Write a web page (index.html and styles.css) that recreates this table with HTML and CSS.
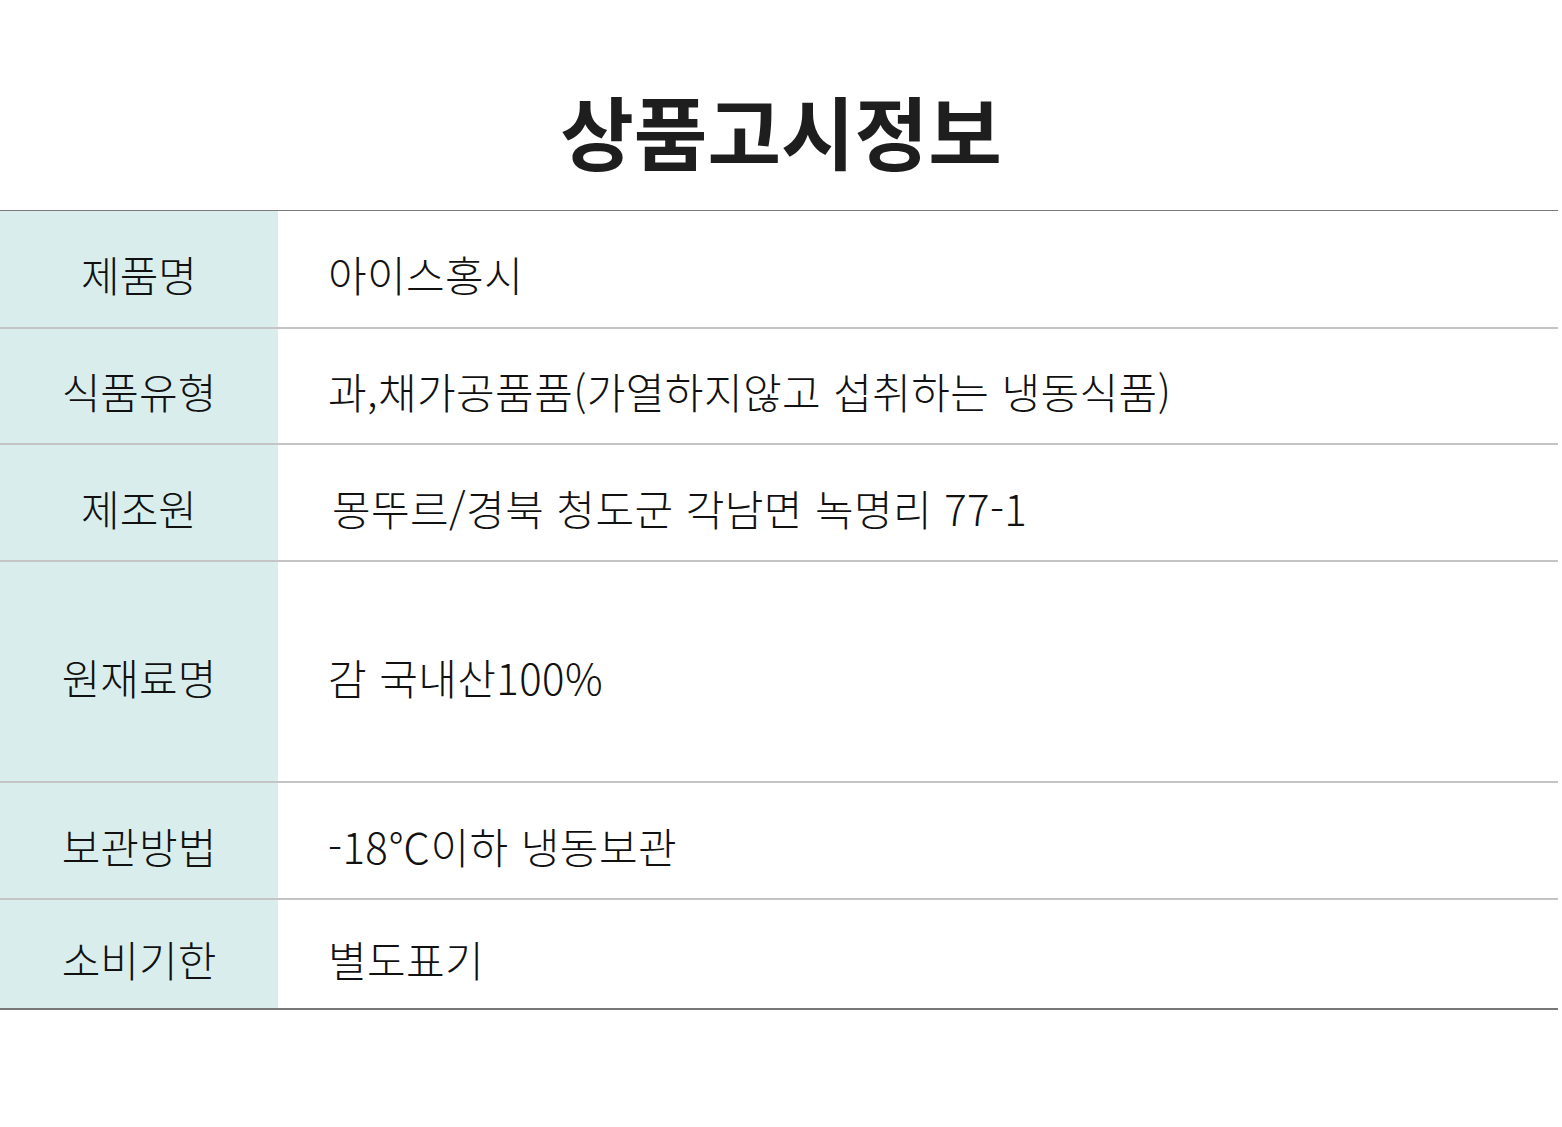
FILE: index.html
```html
<!DOCTYPE html>
<html lang="ko">
<head>
<meta charset="utf-8">
<title>상품고시정보</title>
<link rel="stylesheet" href="styles.css">
</head>
<body>
<h1 class="title">상품고시정보</h1>
<table class="info">
  <tr class="row"><th class="label">제품명</th><td class="value">아이스홍시</td></tr>
  <tr class="row row-short"><th class="label">식품유형</th><td class="value">과,채가공품품(가열하지않고 섭취하는 냉동식품)</td></tr>
  <tr class="row"><th class="label">제조원</th><td class="value value-indent">몽뚜르/경북 청도군 각남면 녹명리 77-1</td></tr>
  <tr class="row row-tall"><th class="label">원재료명</th><td class="value">감 국내산100%</td></tr>
  <tr class="row"><th class="label">보관방법</th><td class="value">-18℃이하 냉동보관</td></tr>
  <tr class="row row-last"><th class="label">소비기한</th><td class="value">별도표기</td></tr>
</table>
</body>
</html>
```

FILE: styles.css
```css
html, body {
  margin: 0;
  padding: 0;
  background: #ffffff;
}
body {
  font-family: "Noto Sans CJK KR", "Noto Sans", sans-serif;
  color: #1a1a1a;
}
.title {
  margin: 0;
  height: 210px;
  box-sizing: border-box;
  padding-top: 74px;
  font-size: 80px;
  line-height: 110px;
  font-weight: 700;
  text-align: center;
  color: #1e1e1e;
}
.info {
  width: 1558px;
  border-collapse: collapse;
  border-top: 1px solid #7a7a7a;
}
.row {
  height: 117px;
  border-bottom: 2px solid #c4c4c4;
}
.row-short {
  height: 116px;
}
.row-tall {
  height: 221px;
}
.row-last {
  height: 110px;
  border-bottom: 2px solid #777777;
}
.label {
  width: 278px;
  padding: 10px 0 0 0;
  background: #d9eeec;
  font-weight: 300;
  font-size: 42px;
  text-align: center;
  color: #111;
}
.value {
  padding: 10px 0 0 50px;
  font-size: 42px;
  font-weight: 300;
  color: #111;
  text-align: left;
  letter-spacing: 0.4px;
}
.value-indent {
  padding-left: 54px;
}
```
